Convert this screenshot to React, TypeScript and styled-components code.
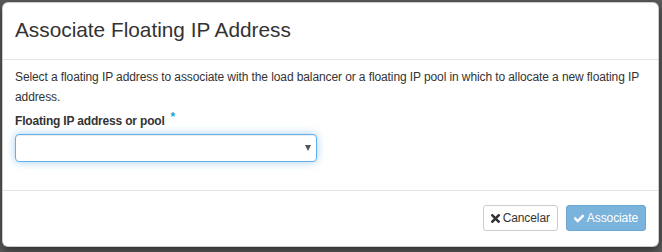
import React from "react";
import styled, { createGlobalStyle } from "styled-components";

const GlobalStyle = createGlobalStyle`
  html, body {
    margin: 0;
    padding: 0;
    background: #5a5a5a;
  }
  * {
    box-sizing: border-box;
  }
`;

const Backdrop = styled.div`
  width: 662px;
  height: 252px;
  padding: 2px 3px 5px 2px;
  font-family: "Liberation Sans", Arial, Helvetica, sans-serif;
  color: #333;
`;

const Modal = styled.div`
  width: 657px;
  height: 245px;
  display: flex;
  flex-direction: column;
  background: #fff;
  border: 1px solid rgba(0, 0, 0, 0.2);
  border-radius: 6px;
  box-shadow: 0 3px 9px rgba(0, 0, 0, 0.5);
  overflow: hidden;
`;

const Header = styled.div`
  padding: 13px 12px 15px;
  border-bottom: 1px solid #e5e5e5;
`;

const Title = styled.h4`
  margin: 0;
  font-size: 20.8px;
  font-weight: 500;
  line-height: 28px;
`;

const Body = styled.div`
  flex: 1;
  padding: 7px 12px 0;
`;

const Description = styled.p`
  margin: 0 0 2px;
  font-size: 12px;
  line-height: 20px;
  letter-spacing: -0.1px;
`;

const FormGroup = styled.div`
  display: flex;
  flex-direction: column;
  gap: 4px;
`;

const Label = styled.label`
  font-size: 12px;
  font-weight: 700;
  line-height: 17px;
  letter-spacing: -0.18px;
`;

const Required = styled.span`
  color: #2a9fd6;
  margin-left: 6px;
  vertical-align: 4px;
  font-size: 12px;
`;

const SelectWrap = styled.div`
  position: relative;
  width: 302px;

  &::after {
    content: "";
    position: absolute;
    right: 6px;
    top: 11px;
    border-left: 3.5px solid transparent;
    border-right: 3.5px solid transparent;
    border-top: 6px solid #555;
    pointer-events: none;
  }
`;

const Select = styled.select`
  display: block;
  width: 100%;
  height: 28px;
  padding: 4px 10px;
  font-family: inherit;
  font-size: 12px;
  color: #555;
  background: #fff;
  border: 1px solid #66afe9;
  border-radius: 4px;
  appearance: none;
  outline: none;
  box-shadow: inset 0 1px 1px rgba(0, 0, 0, 0.075),
    0 0 8px rgba(102, 175, 233, 0.6);
`;

const Footer = styled.div`
  display: flex;
  justify-content: flex-end;
  gap: 8px;
  padding: 14px 12px 15px;
  border-top: 1px solid #e5e5e5;
`;

const Button = styled.button<{ $primary?: boolean }>`
  display: flex;
  align-items: center;
  gap: 3px;
  height: 26px;
  padding: 0 7px;
  font-family: inherit;
  font-size: 12px;
  letter-spacing: -0.1px;
  border-radius: 3px;
  border: 1px solid ${(p) => (p.$primary ? "#6da7d3" : "#ccc")};
  background: ${(p) => (p.$primary ? "#7ab3dc" : "#fff")};
  color: ${(p) => (p.$primary ? "#fff" : "#333")};
  cursor: ${(p) => (p.$primary ? "not-allowed" : "pointer")};
`;

const TimesIcon = () => (
  <svg width="9" height="9" viewBox="0 0 10 10">
    <path d="M1.5 1.5 L8.5 8.5 M8.5 1.5 L1.5 8.5" stroke="#333" strokeWidth="2.8" strokeLinecap="square" />
  </svg>
);

const CheckIcon = () => (
  <svg width="10" height="9" viewBox="0 0 12 10">
    <path d="M1.5 5 L4.5 8 L10.5 2" stroke="#fff" strokeWidth="2.8" fill="none" strokeLinecap="square" />
  </svg>
);

export default function App() {
  return (
    <>
      <GlobalStyle />
      <Backdrop>
        <Modal>
          <Header>
            <Title>Associate Floating IP Address</Title>
          </Header>
          <Body>
            <Description>
              Select a floating IP address to associate with the load balancer or a floating IP pool in
              which to allocate a new floating IP address.
            </Description>
            <FormGroup>
              <Label>
                Floating IP address or pool
                <Required>*</Required>
              </Label>
              <SelectWrap>
                <Select defaultValue="">
                  <option value=""></option>
                </Select>
              </SelectWrap>
            </FormGroup>
          </Body>
          <Footer>
            <Button>
              <TimesIcon />
              Cancelar
            </Button>
            <Button $primary disabled>
              <CheckIcon />
              Associate
            </Button>
          </Footer>
        </Modal>
      </Backdrop>
    </>
  );
}
